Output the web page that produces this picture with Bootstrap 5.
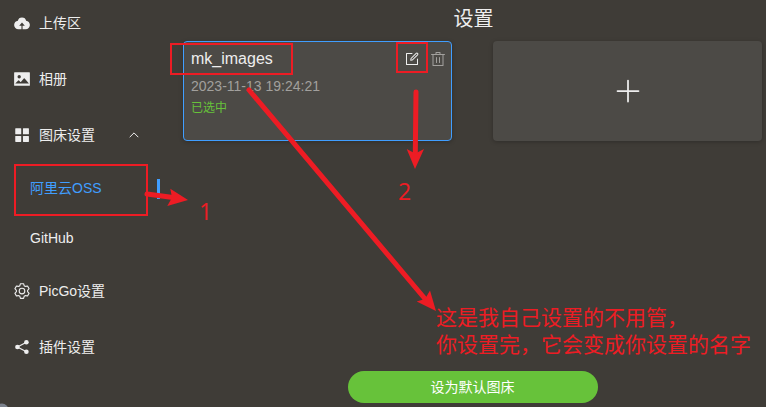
<!DOCTYPE html>
<html lang="zh-CN">
<head>
<meta charset="utf-8">
<meta name="viewport" content="width=device-width, initial-scale=1">
<title>PicGo 图床设置</title>
<link href="https://cdn.jsdelivr.net/npm/bootstrap@5.3.0/dist/css/bootstrap.min.css" rel="stylesheet">
<style>
body { width: 766px; height: 407px; background: #3f3c37; color: #eee; font: 14px/1.5 "Liberation Sans", "Noto Sans CJK SC", sans-serif; }
svg { display: block; flex: none; }
.side { width: 170px; padding-top: 0; margin-top: -5px; }
.side .nav-link { height: 56px; padding: 0 0 0 13px; color: #eee; gap: 8px; }
.side .nav-link.sub { height: 50px; padding-left: 30px; }
.side .nav-link.active { color: #409eff; height: 50px; }
.active-bar { width: 3px; height: 20px; background: #409eff; margin: 2px 10px 0 0; }
.caret { margin-right: 30px; }
.panel { padding: 0 4px 4px 13px; }
.page-title { font-size: 20px; line-height: 28px; height: 36px; padding-left: 2px; margin-top: 5px; }
.configs { gap: 41px; }
.config { width: 269px; height: 100px; border-radius: 4px; background: #4c4a46; border: 1px solid transparent; box-shadow: 0 1px 4px rgba(0,0,0,.25); padding: 4px 5px 0 7px; }
.config.selected { border-color: #409eff; }
.config-name { font-size: 16px; line-height: 26px; }
.config-tools { gap: 10px; margin-top: -1px; }
.config-time { color: #a2a09d; line-height: 28px; }
.config-state { color: #67c23a; font-size: 12px; line-height: 16px; }
.btn-default-bed { width: 250px; height: 32px; background: #67c23a; color: #fff; font-size: 14px; line-height: 30px; padding: 0; }
.btn-default-bed:hover { background: #67c23a; color: #fff; }
.marks { pointer-events: none; }
.marks text { fill: #ed1c24; font-family: "Noto Sans CJK SC", sans-serif; font-size: 21px; }
.marks .step { font-family: "Open Sans", "Noto Sans", sans-serif; font-size: 23px; }
</style>
<script src="https://cdn.jsdelivr.net/npm/bootstrap@5.3.0/dist/js/bootstrap.bundle.min.js"></script>
</head>
<body class="m-0 overflow-hidden position-relative">
<div class="d-flex h-100">
  <nav class="side nav flex-column flex-nowrap flex-shrink-0">
    <a class="nav-link d-flex align-items-center" href="#">
      <svg width="18" height="18" viewBox="0 0 1024 1024" fill="currentColor"><path d="M544 864V672h128L512 480 352 672h128v192H320v-1.6c-5.376.32-10.496 1.6-16 1.6A240 240 0 0 1 64 624c0-123.136 93.12-223.488 212.608-237.248A239.808 239.808 0 0 1 512 192a239.872 239.872 0 0 1 235.456 194.752c119.488 13.76 212.48 114.112 212.48 237.248a240 240 0 0 1-240 240c-5.376 0-10.56-1.28-16-1.6v1.6H544z"/></svg>
      <span>上传区</span>
    </a>
    <a class="nav-link d-flex align-items-center" href="#">
      <svg width="18" height="18" viewBox="0 0 1024 1024" fill="currentColor"><path d="M96 896a32 32 0 0 1-32-32V160a32 32 0 0 1 32-32h832a32 32 0 0 1 32 32v704a32 32 0 0 1-32 32H96zm315.52-228.48-68.928-68.928a32 32 0 0 0-45.248 0L128 768.064h778.688l-242.112-290.56a32 32 0 0 0-49.216 0L458.752 665.408a32 32 0 0 1-47.232 2.112zM256 384a96 96 0 1 0 192.064-.064A96 96 0 0 0 256 384z"/></svg>
      <span>相册</span>
    </a>
    <a class="nav-link d-flex align-items-center" href="#">
      <svg width="18" height="18" viewBox="0 0 1024 1024" fill="currentColor"><rect x="128" y="128" width="340" height="340" rx="32"/><rect x="566" y="128" width="340" height="340" rx="32"/><rect x="128" y="566" width="340" height="340" rx="32"/><rect x="566" y="566" width="340" height="340" rx="32"/></svg>
      <span>图床设置</span>
      <svg class="caret ms-auto" width="12" height="12" viewBox="0 0 12 12" fill="none" stroke="currentColor"><path d="M1.700 8.200 6 3.900l4.300 4.300"/></svg>
    </a>
    <a class="nav-link sub active d-flex align-items-center" href="#"><span>阿里云OSS</span><span class="active-bar ms-auto"></span></a>
    <a class="nav-link sub d-flex align-items-center" href="#">GitHub</a>
    <a class="nav-link d-flex align-items-center" href="#">
      <svg width="18" height="18" viewBox="0 0 1024 1024" fill="currentColor"><path d="M600.704 64a32 32 0 0 1 30.464 22.208l35.2 109.376c14.784 7.232 28.928 15.36 42.432 24.512l112.384-24.192a32 32 0 0 1 34.432 15.36L944.32 364.8a32 32 0 0 1-4.032 37.504l-77.12 85.12a357.12 357.12 0 0 1 0 49.024l77.12 85.248a32 32 0 0 1 4.032 37.504l-88.704 153.6a32 32 0 0 1-34.432 15.296L708.8 803.904c-13.44 9.088-27.648 17.28-42.368 24.512l-35.264 109.376A32 32 0 0 1 600.704 960H423.296a32 32 0 0 1-30.464-22.208L357.696 828.48a351.616 351.616 0 0 1-42.56-24.64l-112.32 24.256a32 32 0 0 1-34.432-15.36L79.68 659.2a32 32 0 0 1 4.032-37.504l77.12-85.248a357.12 357.12 0 0 1 0-48.896l-77.12-85.248A32 32 0 0 1 79.68 364.8l88.704-153.6a32 32 0 0 1 34.432-15.296l112.32 24.256c13.568-9.152 27.776-17.408 42.56-24.64l35.2-109.312A32 32 0 0 1 423.232 64H600.64zm-23.424 64H446.72l-36.352 113.088-24.512 11.968a294.113 294.113 0 0 0-34.816 20.096l-22.656 15.36-116.224-25.088-65.28 113.152 79.68 88.192-1.92 27.136a293.12 293.12 0 0 0 0 40.192l1.92 27.136-79.808 88.192 65.344 113.152 116.224-25.024 22.656 15.296a294.113 294.113 0 0 0 34.816 20.096l24.512 11.968L446.72 896h130.688l36.48-113.152 24.448-11.904a288.282 288.282 0 0 0 34.752-20.096l22.592-15.296 116.288 25.024 65.28-113.152-79.744-88.192 1.92-27.136a293.12 293.12 0 0 0 0-40.256l-1.92-27.136 79.808-88.128-65.344-113.152-116.288 24.96-22.592-15.232a287.616 287.616 0 0 0-34.752-20.096l-24.448-11.904L577.344 128zM512 320a192 192 0 1 1 0 384 192 192 0 0 1 0-384zm0 64a128 128 0 1 0 0 256 128 128 0 0 0 0-256z"/></svg>
      <span>PicGo设置</span>
    </a>
    <a class="nav-link d-flex align-items-center" href="#">
      <svg width="18" height="18" viewBox="0 0 18 18" fill="currentColor"><path d="M13.500 4.300 4.400 9l9.100 4.700" fill="none" stroke="currentColor" stroke-width="1.200"/><circle cx="13.400" cy="4.300" r="2.300"/><circle cx="4.400" cy="9" r="2.300"/><circle cx="13.400" cy="13.700" r="2.300"/></svg>
      <span>插件设置</span>
    </a>
  </nav>

  <main class="panel flex-grow-1 d-flex flex-column">
    <h1 class="page-title text-center fw-normal mb-0">设置</h1>
    <div class="configs d-flex">
      <section class="config selected">
        <div class="d-flex justify-content-between">
          <span class="config-name">mk_images</span>
          <span class="config-tools d-flex align-items-center">
            <svg width="16" height="16" viewBox="0 0 1024 1024" fill="#eee"><path d="M832 512a32 32 0 1 1 64 0v352a32 32 0 0 1-32 32H160a32 32 0 0 1-32-32V160a32 32 0 0 1 32-32h352a32 32 0 0 1 0 64H192v640h640V512z"/><path d="m469.952 554.24 52.8-7.552L847.104 222.4a32 32 0 1 0-45.248-45.248L477.44 501.44l-7.552 52.8zm422.4-422.4a96 96 0 0 1 0 135.808l-331.84 331.84a32 32 0 0 1-18.112 9.088L436.8 623.68a32 32 0 0 1-36.224-36.224l15.104-105.6a32 32 0 0 1 9.024-18.112l331.904-331.84a96 96 0 0 1 135.744 0z"/></svg>
            <svg width="16" height="16" viewBox="0 0 1024 1024" fill="#a2a09d"><path d="M160 256H96a32 32 0 0 1 0-64h256V95.936a32 32 0 0 1 32-32h256a32 32 0 0 1 32 32V192h256a32 32 0 1 1 0 64h-64v672a32 32 0 0 1-32 32H192a32 32 0 0 1-32-32V256zm448-64v-64H416v64h192zM224 896h576V256H224v640zm192-128a32 32 0 0 1-32-32V416a32 32 0 0 1 64 0v320a32 32 0 0 1-32 32zm192 0a32 32 0 0 1-32-32V416a32 32 0 0 1 64 0v320a32 32 0 0 1-32 32z"/></svg>
          </span>
        </div>
        <div class="config-time">2023-11-13 19:24:21</div>
        <div class="config-state">已选中</div>
      </section>
      <section class="config d-flex align-items-center justify-content-center p-0">
        <svg width="28" height="28" viewBox="0 0 1024 1024" fill="#eee"><path d="M480 480V128a32 32 0 0 1 64 0v352h352a32 32 0 1 1 0 64H544v352a32 32 0 1 1-64 0V544H128a32 32 0 0 1 0-64h352z"/></svg>
      </section>
    </div>
    <button type="button" class="btn btn-default-bed rounded-pill border-0 mt-auto mx-auto">设为默认图床</button>
  </main>
</div>

<!-- Annotation layer over the window -->
<svg class="marks position-absolute top-0 start-0" width="766" height="407" viewBox="0 0 766 407">
  <circle cx="2" cy="410" r="6.500" fill="#7b818c"/>
  <g fill="none" stroke="#ed1c24" stroke-width="2">
    <rect x="15" y="165" width="132" height="50"/>
    <rect x="171" y="44" width="121" height="30"/>
    <rect x="397" y="43" width="30" height="29"/>
  </g>
  <g stroke="#ed1c24" stroke-width="5" stroke-linecap="round">
    <path d="M147 194 173 197.500"/>
    <path d="M249 90 426 300"/>
    <path d="M416 92 415.300 153"/>
  </g>
  <g fill="#ed1c24">
    <path d="M188 200 170.300 188.700 172 197.500 167.300 206z"/>
    <path d="M436 311 430 290.500 425 299 416.700 301.500z"/>
    <path d="M415 169 406.700 149 415.300 153.500 424 149z"/>
  </g>
  <text class="step" x="199" y="220">1</text>
  <text class="step" x="398" y="200">2</text>
  <text x="436" y="325">这是我自己设置的不用管，</text>
  <text x="436" y="352">你设置完，它会变成你设置的名字</text>
</svg>
</body>
</html>
